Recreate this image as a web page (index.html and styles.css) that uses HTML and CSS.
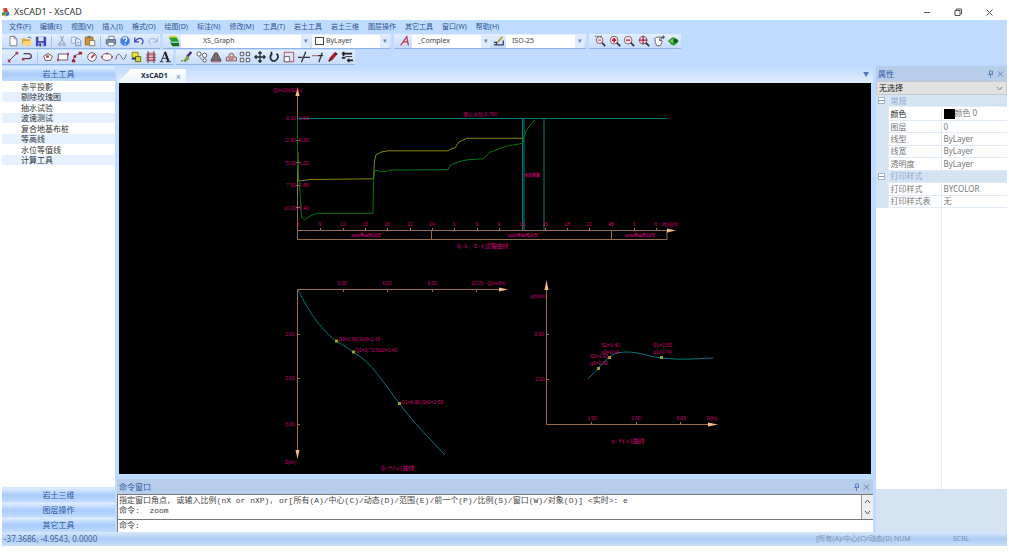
FILE: index.html
```html
<!DOCTYPE html>
<html lang="zh-CN">
<head>
<meta charset="utf-8">
<meta name="viewport" content="width=device-width">
<title>XsCAD1 - XsCAD</title>
<link rel="stylesheet" href="styles.css">
</head>
<body>
<div class="app">
  <header class="titlebar">
    <svg class="logo" viewBox="0 0 10 12"><path fill="#d2452c" d="M1 1l5-1 2 5-5 2z"/><path fill="#3f9b4a" d="M0 6l4-1 1 4-5 1z"/><path fill="#3a6fc4" d="M5 6l4-1v4l-4 2z"/><path fill="#e6ad2a" d="M1 10l4-1v2z"/></svg>
    <h1>XsCAD1 - XsCAD</h1>
    <div class="window-buttons">
      <button aria-label="Minimize"><svg viewBox="0 0 9 9"><path d="M1 4.500h6"/></svg></button>
      <button aria-label="Restore"><svg viewBox="0 0 9 9"><path d="M1 2.500h5v5h-5zM2.500 2v-1h5v5h-1"/></svg></button>
      <button aria-label="Close"><svg viewBox="0 0 9 9"><path d="M1.500 1.500l6 6m0-6l-6 6"/></svg></button>
    </div>
  </header>

  <nav class="menubar">
    <a href="#">文件(F)</a><a href="#">编辑(E)</a><a href="#">视图(V)</a><a href="#">插入(I)</a><a href="#">格式(O)</a><a href="#">绘图(D)</a><a href="#">标注(N)</a><a href="#">修改(M)</a><a href="#">工具(T)</a><a href="#">岩土工具</a><a href="#">岩土三维</a><a href="#">图层操作</a><a href="#">其它工具</a><a href="#">窗口(W)</a><a href="#">帮助(H)</a>
  </nav>

  <div class="toolbar-row">
    <div class="toolbar">
      <div class="tools">
        <button aria-label="New"><svg viewBox="0 0 14 14"><path fill="#fff" stroke="#6b7485" d="M3.500 1.500h5l3 3v8h-8z"/><path stroke="#6b7485" d="M8.500 1.500v3h3"/></svg></button>
        <button aria-label="Open"><svg viewBox="0 0 14 14"><path fill="#e3a62c" d="M1 4h4l1 1h5v7H1z"/><path fill="#ffd978" d="M3 7h11l-3 5H1z"/><path stroke="#4467a8" d="M8 3q3-2 4 1"/></svg></button>
        <button aria-label="Save"><svg viewBox="0 0 14 14"><path fill="#4546b5" d="M1 2h12v11H1z"/><path fill="#dfe8fa" d="M4 2h6v5H4z"/><path fill="#b9c5e6" d="M4 9h6v4H4z"/><path fill="#303392" d="M5 10h2v3H5z"/></svg></button>
      </div>
      <i class="sep"></i>
      <div class="tools">
        <button aria-label="Cut"><svg viewBox="0 0 14 14"><path stroke="#8794ac" d="M5 1l4 8M9 1L5 9"/><circle cx="4.500" cy="11" r="1.500" stroke="#7b8ec0"/><circle cx="9.500" cy="11" r="1.500" stroke="#7b8ec0"/></svg></button>
        <button aria-label="Copy"><svg viewBox="0 0 14 14"><path fill="#e8f0fc" stroke="#8aa0c8" d="M1.500 2.500h6v7h-6z"/><path fill="#e8f0fc" stroke="#6583b8" d="M6.500 4.500h4l2 2v6h-6z"/><path stroke="#8aa0c8" d="M8 8.500h3M8 10.500h3"/></svg></button>
        <button aria-label="Paste"><svg viewBox="0 0 14 14"><path fill="#d9912b" stroke="#996018" d="M1.500 2.500h9v9h-9z"/><path fill="#777" d="M4 1h4v3H4z"/><path fill="#fff" stroke="#8b7051" d="M6.500 6.500h6v6h-6z"/></svg></button>
      </div>
      <i class="sep"></i>
      <div class="tools">
        <button aria-label="Print"><svg viewBox="0 0 14 14"><path fill="#fff" stroke="#65758d" d="M4.500 1.500h6v4h-6z"/><path fill="#8491a6" stroke="#54637a" d="M1.500 5.500h11v5h-11z"/><path fill="#fff" stroke="#65758d" d="M3.500 8.500h7v4h-7z"/></svg></button>
        <button aria-label="Help"><svg viewBox="0 0 14 14"><circle cx="7" cy="7" r="5.500" fill="#3e7de0" stroke="#7da7e8"/><path stroke="#fff" stroke-width="1.500" d="M5 5q0-2 2-2 2 0 2 2 0 1-2 3M7 10v1"/></svg></button>
        <button aria-label="Undo"><svg viewBox="0 0 14 14"><path stroke="#4547b9" stroke-width="1.500" d="M2 3v5h5M2 8q3-5 7-4 5 2 1 7"/></svg></button>
        <button aria-label="Redo"><svg viewBox="0 0 14 14"><path stroke="#8fa3d8" d="M12 3v5H7M12 8Q9 3 5 4q-5 2-1 7"/></svg></button>
      </div>
    </div>
    <div class="toolbar">
      <div class="tools">
        <button aria-label="Layers"><svg viewBox="0 0 14 14"><path fill="#e6d625" d="M1 1h8l3 3H4z"/><path fill="#26a233" d="M1 3h9l3 5H4z"/><path fill="#137425" d="M2 7l2 2h9v4H5z"/></svg></button>
      </div>
      <label class="combo layer"><select aria-label="Layer"><option>XS_Graph</option></select></label>
      <label class="combo color"><i class="swatch"></i><select aria-label="Color"><option>ByLayer</option></select></label>
    </div>
    <div class="toolbar">
      <div class="tools">
        <button aria-label="Text style"><svg viewBox="0 0 14 14"><path stroke="#c23944" stroke-width="1.500" d="M2 12l7-10 2 10M5 8h5"/></svg></button>
      </div>
      <label class="combo style"><select aria-label="Text style"><option>_Complex</option></select></label>
      <div class="tools">
        <button aria-label="Dimension style"><svg viewBox="0 0 14 14"><path stroke="#b49535" stroke-width="2" d="M5 9l6-7"/><path stroke="#30435b" stroke-width="1.500" d="M1 8.500h3v3h8v-5M1 11.500h3"/></svg></button>
      </div>
      <label class="combo style"><select aria-label="Dimension style"><option>ISO-25</option></select></label>
    </div>
    <div class="toolbar">
      <div class="tools zoom">
        <button aria-label="Zoom window"><svg viewBox="0 0 14 14"><path stroke="#3d3d46" stroke-dasharray="2 1" d="M1 1.500h8"/><circle cx="6.500" cy="6" r="4" fill="#f2e4e9" stroke="#6d5865"/><path stroke="#bd3b4a" d="M4.500 6h4"/><path stroke="#333" stroke-width="2" d="M9.500 9l3.500 4"/></svg></button>
        <button aria-label="Zoom in"><svg viewBox="0 0 14 14"><circle cx="6" cy="6" r="4.500" fill="#f7e7ea" stroke="#6d5865"/><path stroke="#bd1f30" stroke-width="2" d="M3.500 6h5M6 3.500v5"/><path stroke="#333" stroke-width="2" d="M9 9l4 4"/></svg></button>
        <button aria-label="Zoom out"><svg viewBox="0 0 14 14"><circle cx="6" cy="6" r="4.500" fill="#f7e7ea" stroke="#6d5865"/><path stroke="#bd1f30" stroke-width="1.500" d="M3.500 6h5"/><path stroke="#333" stroke-width="2" d="M9 9l4 4"/></svg></button>
        <button aria-label="Zoom extents"><svg viewBox="0 0 14 14"><circle cx="6" cy="6" r="4.500" fill="#efdce6" stroke="#6d5865"/><path stroke="#a62445" stroke-width="1.500" d="M1 6h10M6 1v10"/><path stroke="#333" stroke-width="2" d="M9 9l4 4"/></svg></button>
        <button aria-label="Pan"><svg viewBox="0 0 14 14"><path fill="#fff" stroke="#4b4f59" d="M1.500 4.500l3-2h6v2h-3v2h3v2l-2 4h-4l-2-4v-3z"/><path stroke="#333" d="M10 2.500h4M12 .500v4"/></svg></button>
        <button aria-label="Orbit"><svg viewBox="0 0 14 14"><path fill="#269732" d="M1 7l5-4h3l5 4-5 5H6z"/><path fill="#78cf58" d="M3 7l4-3v6z"/><path fill="#165322" d="M8 5h4v4H8z"/></svg></button>
      </div>
    </div>
  </div>

  <div class="toolbar-row">
    <div class="toolbar">
      <div class="tools">
        <button aria-label="Line"><svg viewBox="0 0 14 14"><path stroke="#3e3942" d="M3 11l8-8"/><path fill="#b33b4b" d="M1 10h3v3H1zM10 1h3v3h-3z"/></svg></button>
        <button aria-label="Polyline"><svg viewBox="0 0 14 14"><path stroke="#4f3e48" stroke-width="1.500" d="M3 3h5q4 0 4 3t-4 3H2"/><path fill="#b33b4b" d="M1 8h3v3H1z"/></svg></button>
      </div>
      <i class="sep"></i>
      <div class="tools draw">
        <button aria-label="Polygon"><svg viewBox="0 0 14 14"><path fill="#fff" stroke="#594551" d="M7 3l5 3-2 5H4L2 6z"/><path fill="#b33b4b" d="M5 5h3v3H5z"/></svg></button>
        <button aria-label="Rectangle"><svg viewBox="0 0 14 14"><path fill="#fff" stroke="#594551" d="M1.500 3.500h11v7h-11z"/><path fill="#b33b4b" d="M0 9h2v3H0zM12 2h2v3h-2z"/></svg></button>
        <button aria-label="Arc"><svg viewBox="0 0 14 14"><path stroke="#594551" d="M3 12Q2 4 11 3"/><path fill="#a82237" d="M1 10h4v3H1zM9 1h4v3H9zM3 5h3v3H3z"/></svg></button>
        <button aria-label="Circle"><svg viewBox="0 0 14 14"><circle cx="7" cy="7" r="5" fill="#fff" stroke="#594551"/><path stroke="#b33b4b" stroke-width="2" d="M6 8l4-4"/></svg></button>
        <button aria-label="Ellipse"><svg viewBox="0 0 14 14"><ellipse cx="7" cy="7" rx="6" ry="4" fill="#fff" stroke="#6b4553"/><path fill="#b33b4b" d="M0 6h2v2H0zM6 2h2v2H6zM12 6h2v2h-2z"/></svg></button>
        <button aria-label="Spline"><svg viewBox="0 0 14 14"><path stroke="#414c66" d="M1 10C3 0 6 4 8 8s4 1 5-4"/></svg></button>
        <button aria-label="Insert block"><svg viewBox="0 0 14 14"><path fill="#f0e52d" stroke="#777b25" d="M2.500 1.500h7v6h-7z"/><path fill="#d9d62b" stroke="#555a25" d="M6.500 6.500h6v6h-6z"/><path fill="#29356a" d="M2 8h5v2H2z"/></svg></button>
        <button aria-label="Hatch"><svg viewBox="0 0 14 14"><path fill="#e2c8d0" stroke="#a24155" d="M3.500 2.500h7v9h-7z"/><path stroke="#b33b4b" d="M1 4.500h12M1 7.500h12M1 10.500h12"/><path stroke="#50333d" d="M3.500 0v14M10.500 0v14"/></svg></button>
        <button aria-label="Text"><svg viewBox="0 0 14 14"><path stroke="#1c2025" d="M1 12.500h4M8 12.500h6M4 8.500h5M2.500 12L7 1"/><path stroke="#1c2025" stroke-width="2.500" d="M7 1l4 11"/></svg></button>
      </div>
    </div>
    <div class="toolbar">
      <div class="tools modify">
        <button aria-label="Erase"><svg viewBox="0 0 14 14"><path stroke="#4a3978" stroke-width="3" d="M12 1L7 7"/><path fill="#85a43f" d="M7 5l3 4-5 4-1-3z"/><path stroke="#333" stroke-dasharray="2 1" d="M0 11.500h5"/></svg></button>
        <button aria-label="Copy object"><svg viewBox="0 0 14 14"><circle cx="3.500" cy="3.500" r="2.500" fill="#fff" stroke="#4e4e59"/><circle cx="10" cy="5" r="2.500" fill="#fff" stroke="#4e4e59"/><circle cx="10" cy="11" r="2" fill="#fff" stroke="#4e4e59"/><path stroke="#555" d="M4 7l3 3"/></svg></button>
        <button aria-label="Mirror"><svg viewBox="0 0 14 14"><path fill="#777" stroke="#3e3e49" d="M6 2v9H1zM8 2v9h5z"/><path stroke="#b33b4b" d="M7 1v12M1 12.500h12"/></svg></button>
        <button aria-label="Offset"><svg viewBox="0 0 14 14"><path fill="#e4c9d0" stroke="#704857" d="M1.500 11.500v-4l3-1q0-4 3-4t3 4l3 1v4z"/><path stroke="#a43c51" d="M4 9.500h6M5.500 9V7h4v2"/></svg></button>
        <button aria-label="Array"><svg viewBox="0 0 14 14"><path fill="#eef4ff" stroke="#43434e" d="M1.500 1.500h4v4h-4zM8.500 1.500h4v4h-4zM1.500 8.500h4v4h-4zM8.500 8.500h4v4h-4z"/></svg></button>
        <button aria-label="Move"><svg viewBox="0 0 14 14"><path stroke="#282b36" stroke-width="1.500" d="M7 1v12M1 7h12M5 3l2-2 2 2M5 11l2 2 2-2M3 5L1 7l2 2M11 5l2 2-2 2"/></svg></button>
        <button aria-label="Rotate"><svg viewBox="0 0 14 14"><path stroke="#1f2834" stroke-width="2" d="M5 3Q2 5 3 9q2 4 6 2 5-4 1-8M4 1v4"/></svg></button>
        <button aria-label="Scale"><svg viewBox="0 0 14 14"><path stroke="#b33b4b" d="M1.500 1.500h11v11h-11z"/><path fill="#fff" stroke="#5c5360" d="M1.500 6.500h6v6h-6z"/></svg></button>
        <button aria-label="Trim"><svg viewBox="0 0 14 14"><path stroke="#303039" stroke-width="1.500" d="M0 7.500h5M7 7.500h7M4 13l5-12"/></svg></button>
        <button aria-label="Extend"><svg viewBox="0 0 14 14"><path stroke="#303039" stroke-width="1.500" d="M7 5.500h6M8 13l4-11"/><path stroke="#b33b4b" d="M0 5.500h7"/></svg></button>
        <button aria-label="Match properties"><svg viewBox="0 0 14 14"><path stroke="#a91c24" stroke-width="4" d="M4 10l6-7"/><path stroke="#492132" stroke-width="2" d="M2 12l3-3M9 2l3 2"/></svg></button>
        <button aria-label="Break"><svg viewBox="0 0 14 14"><path stroke="#20222a" stroke-width="2" d="M1 3h12M1 8h4M7 11h7M3 1v5M9 9v4"/><path stroke="#20222a" d="M5 6.500h8"/></svg></button>
      </div>
    </div>
  </div>

  <main class="workspace">
    <aside class="toolbox">
      <button class="section">岩土工具</button>
      <ul>
        <li>赤平投影</li>
        <li>剔除玫瑰图</li>
        <li>抽水试验</li>
        <li>波速测试</li>
        <li>复合地基布桩</li>
        <li>等高线</li>
        <li>水位等值线</li>
        <li>计算工具</li>
      </ul>
      <button class="section">岩土三维</button>
      <button class="section">图层操作</button>
      <button class="section">其它工具</button>
    </aside>

    <section class="document">
      <div class="tabs">
        <div class="tab"><span>XsCAD1</span><button aria-label="Close tab">×</button></div>
        <button class="tab-menu" aria-label="Tab list">▼</button>
      </div>

      <svg class="drawing" viewBox="119 83 752 391">
        <!-- Q-t / S-t -->
        <g class="axis">
          <path d="M297.500 92v147.500h369.500v-9M297 230.500h374M431.500 230v9M611.500 230v9"/>
          <path d="M320.500 228v3M343.500 228v3M365.500 228v3M387.500 228v3M410.500 228v3M432.500 228v3M454.500 228v3M477.500 228v3M499.500 228v3M522.500 228v3M545.500 228v3M567.500 228v3M589.500 228v3M634.500 228v3M656.500 228v3M296 140.500h4M296 162.500h4M296 185.500h4M296 207.500h4"/>
          <path class="arrow" d="M295.500 96l2-9 2 9zM667 228.500l9 2-9 2z"/>
        </g>
        <path class="curve" d="M297 118.500h370M522.500 118v112M524 118v112M544 118v112"/>
        <path class="yield" d="M298 152v28l2 1 10-1.500 63.500-.700 1-18 1.500-6 6-3 6-1h60l2-1.500 5-1.500 4-6 8-3.500h56"/>
        <path class="level" d="M297.500 119v46l2.500 27 1.500 25 3.500 2.500 7-4.500 5-1.700h56l.500-33 1.500-10 5 1h7l3-1.200 58-.500 2-4.300 9-3.500 8-2 16-1 7-6.500 16-6 17-3 .500-4 2.500-8 4-6 5-5.500"/>
        <g class="num">
          <text x="273" y="92">Q(m3/h)S(m)</text>
          <text x="286" y="120">0.00</text><text x="299" y="120">0.00</text>
          <text x="286" y="142">2.50</text><text x="299" y="142">0.60</text>
          <text x="286" y="165">5.00</text><text x="299" y="165">1.20</text>
          <text x="286" y="187">7.50</text><text x="299" y="187">1.80</text>
          <text x="284" y="210">10.00</text><text x="299" y="210">2.40</text>
          <text x="463" y="116">静止水位:2.750</text>
          <text x="524" y="177" class="small">水位恢复</text>
          <text x="351" y="237" class="small">2021年06月20日</text>
          <text x="508" y="237" class="small">2021年06月21日</text>
          <text x="625" y="237" class="small">2021年06月22日</text>
          <text x="662" y="226">时间(h)</text>
        </g>
        <g class="num mid">
          <text x="298" y="226">6</text><text x="320" y="226">9</text><text x="343" y="226">12</text><text x="365" y="226">15</text><text x="387" y="226">18</text><text x="410" y="226">21</text><text x="432" y="226">24</text><text x="454" y="226">3</text><text x="477" y="226">6</text><text x="499" y="226">9</text><text x="522" y="226">12</text><text x="545" y="226">15</text><text x="567" y="226">18</text><text x="589" y="226">21</text><text x="611" y="226">48</text><text x="634" y="226">3</text><text x="656" y="226">6</text>
        </g>
        <text class="caption" x="457" y="248">Q-t、S-t过程曲线</text>

        <!-- Q-f(s) -->
        <g class="axis">
          <path d="M297.500 455V289.500H504M343.500 289v3M387.500 289v3M432.500 289v3M476.500 289v3M297 334.500h3M297 378.500h3M297 424.500h3"/>
          <path class="arrow" d="M499 287.500l9 2-9 2zM295.500 450l2 9 2-9z"/>
        </g>
        <path class="curve" d="M298 290C306 305 315 324 336 341C343 345 348 348 353 352C372 362 384 384 399 403C414 423 428 437 445 455"/>
        <path class="point" d="M335 339.500h3v3h-3zM352 350.500h3v3h-3zM398 402h3v3h-3z"/>
        <g class="num mid">
          <text x="342" y="285">3.00</text><text x="387" y="285">6.00</text><text x="432" y="285">9.00</text><text x="477" y="285">12.00</text>
          <text x="290" y="336">1.00</text><text x="290" y="380">2.00</text><text x="290" y="426">3.00</text>
          <text x="290" y="464">S(m)</text>
        </g>
        <g class="num">
          <text x="487" y="285">Q(m3/h)</text>
          <text x="338" y="341">Q3=2.68,Sd3=1.16</text>
          <text x="355" y="352">Q2=3.73,Sd2=1.40</text>
          <text x="401" y="404">Q1=6.80,Sd1=2.55</text>
        </g>
        <text class="caption" x="381" y="470">Q-f(s)曲线</text>

        <!-- q-f(s) -->
        <g class="axis">
          <path d="M546.500 286v138.500H713M546 334.500h3M546 379.500h3M591.500 422v3M636.500 422v3M680.500 422v3"/>
          <path class="arrow" d="M544.500 290l2-10 2 10zM708 422.500l10 2-10 2z"/>
        </g>
        <path class="curve" d="M588 379L609 357C614 353 621 352 627 352C640 352 650 357 661 358C684 360 690 359 713 358"/>
        <path class="point" d="M597 367h3v3h-3zM608 356h3v3h-3zM660 356h3v3h-3z"/>
        <g class="num mid">
          <text x="539" y="336">2.00</text><text x="540" y="381">1.00</text>
          <text x="592" y="420">1.00</text><text x="636" y="420">2.00</text><text x="681" y="420">3.00</text><text x="712" y="420">S(m)</text>
          <text x="538" y="298">q(l/sm)</text>
        </g>
        <g class="num">
          <text x="601" y="347">S2=1.40</text><text x="601" y="354">q2=0.94</text>
          <text x="590" y="358">S3=1.16</text><text x="590" y="365">q3=0.82</text>
          <text x="653" y="347">S1=2.55</text><text x="653" y="354">q1=0.74</text>
        </g>
        <text class="caption" x="611" y="443">q-f(s)曲线</text>
      </svg>

      <div class="command">
        <div class="pane-head">
          <h2>命令窗口</h2>
          <button aria-label="Pin"><svg viewBox="0 0 7 8"><path d="M2.500 1v3h3V1zM1 4.500h5M3.500 5v3"/></svg></button>
          <button aria-label="Close"><svg viewBox="0 0 7 8"><path d="M1 1.500l5 5m0-5l-5 5"/></svg></button>
        </div>
        <div class="log">
          <p>指定窗口角点, 或输入比例(nX or nXP), or[所有(A)/中心(C)/动态(D)/范围(E)/前一个(P)/比例(S)/窗口(W)/对象(O)] &lt;实时&gt;: e<br>命令: &nbsp;zoom</p>
          <div class="scroll">
            <button aria-label="Scroll up"><svg viewBox="0 0 7 5"><path d="M1 4l2.500-3L6 4"/></svg></button>
            <button aria-label="Scroll down"><svg viewBox="0 0 7 5"><path d="M1 1l2.500 3L6 1"/></svg></button>
          </div>
        </div>
        <div class="prompt">
          <label for="cmd">命令:</label>
          <input id="cmd" type="text">
        </div>
      </div>
    </section>

    <aside class="properties">
      <div class="pane-head">
        <h2>属性</h2>
        <button aria-label="Pin"><svg viewBox="0 0 7 8"><path d="M2.500 1v3h3V1zM1 4.500h5M3.500 5v3"/></svg></button>
        <button aria-label="Close"><svg viewBox="0 0 7 8"><path d="M1 1.500l5 5m0-5l-5 5"/></svg></button>
      </div>
      <label class="picker">
        <select aria-label="Selection"><option>无选择</option></select>
        <svg viewBox="0 0 7 5"><path d="M1 1l2.500 3L6 1"/></svg>
      </label>
      <table>
        <colgroup><col class="col-fold"><col class="col-name"><col></colgroup>
        <tr class="group"><td><i class="fold"></i></td><th colspan="2">常规</th></tr>
        <tr class="current"><td></td><th>颜色</th><td><i class="chip"></i>颜色 0</td></tr>
        <tr><td></td><th>图层</th><td>0</td></tr>
        <tr><td></td><th>线型</th><td>ByLayer</td></tr>
        <tr><td></td><th>线宽</th><td>ByLayer</td></tr>
        <tr><td></td><th>透明度</th><td>ByLayer</td></tr>
        <tr class="group"><td><i class="fold"></i></td><th colspan="2">打印样式</th></tr>
        <tr><td></td><th>打印样式</th><td>BYCOLOR</td></tr>
        <tr><td></td><th>打印样式表</th><td>无</td></tr>
      </table>
      <div class="rest"></div>
      <div class="hint"></div>
    </aside>
  </main>

  <footer class="statusbar">
    <span class="coords">-37.3686, -4.9543, 0.0000</span>
    <span class="mode">[所有(A)/中心(C)/动态(D) NUM</span>
    <span class="lock">SCRL</span>
  </footer>
</div>
</body>
</html>
```

FILE: styles.css
```css
* {
  box-sizing: border-box;
}

body {
  margin: 0;
  font-family: "Noto Sans", "Noto Sans CJK SC", sans-serif;
  font-size: 8px;
  line-height: 10px;
  color: #444;
  background: #fff;
}

button, select, input {
  margin: 0;
  padding: 0;
  border: 0;
  border-radius: 0;
  background: none;
  font: inherit;
  color: inherit;
  appearance: none;
  outline: none;
}

h1, h2, p, ul {
  margin: 0;
  padding: 0;
  font-size: inherit;
  font-weight: normal;
  list-style: none;
}

svg {
  display: block;
  fill: none;
}

.app {
  display: flex;
  flex-direction: column;
  min-height: 100vh;
  padding: 0 2px 6px;
}

/* title bar */

.titlebar {
  display: flex;
  align-items: center;
  height: 20px;
  padding-top: 4px;
}

.logo {
  width: 8px;
  height: 11px;
}

.titlebar h1 {
  flex: 1;
  padding-left: 4px;
  font-size: 9px;
  color: #333;
}

.window-buttons {
  display: flex;
  gap: 22px;
  padding-right: 13px;
}

.window-buttons svg {
  width: 9px;
  height: 9px;
  stroke: #555;
}

/* menu and toolbars */

.menubar {
  display: flex;
  align-items: center;
  gap: 9px;
  height: 14px;
  padding-left: 7px;
  background: #bfdbff;
  font-size: 7px;
}

.menubar a {
  color: #2c5590;
  text-decoration: none;
  white-space: nowrap;
}

.toolbar-row {
  display: flex;
  gap: 3px;
  height: 16px;
  background: #bfdbff;
}

.toolbar {
  display: flex;
  align-items: center;
  height: 15px;
  padding-left: 4px;
  border-bottom: 1px solid #8fb4e6;
  background: linear-gradient(#e3efff, #c7dcfa);
}

.tools {
  display: flex;
}

.tools button {
  flex: 1 0 14px;
  padding: 0 1px;
}

.tools svg {
  width: 12px;
  height: 12px;
}

.tools.draw {
  width: 132px;
}

.tools.modify {
  width: 175px;
}

.tools.zoom {
  width: 88px;
}

.sep {
  width: 1px;
  height: 11px;
  margin: 0 3px;
  background: #a6c3ee;
}

.combo {
  display: flex;
  align-items: center;
  height: 13px;
  margin-right: 2px;
  background: #fff;
}

.combo select {
  flex: 1;
  min-width: 0;
  height: 13px;
  font-size: 7px;
}

.combo::after {
  content: "▾";
  width: 9px;
  height: 13px;
  background: #deebfd;
  color: #5e83bc;
  font-size: 7px;
  line-height: 12px;
  text-align: center;
}

.combo.layer {
  width: 129px;
  padding-left: 22px;
}

.combo.color {
  width: 77px;
  padding-left: 3px;
}

.combo.style {
  width: 78px;
  padding-left: 6px;
}

.swatch {
  width: 9px;
  height: 8px;
  margin-right: 2px;
  border: 1px solid #444;
}

/* work area */

.workspace {
  flex: 1;
  display: grid;
  grid-template-columns: 113px minmax(0, 1fr) 131px;
  background: #bfdbff;
}

.toolbox {
  display: flex;
  flex-direction: column;
  background: #fff;
}

.toolbox ul {
  flex: 1;
}

.toolbox li {
  height: 11px;
  padding-left: 19px;
  color: #333;
  line-height: 11px;
}

.toolbox li:nth-child(even) {
  height: 10px;
  background: #e5f1ff;
  line-height: 10px;
}

.section {
  height: 15px;
  border-top: 1px solid #d5e6fd;
  background: linear-gradient(#e0edff, #a9ccfb 50%, #c0dbff);
  color: #2d5c9e;
}

.document {
  display: flex;
  flex-direction: column;
  padding: 0 3px 0 2px;
}

.tabs {
  display: flex;
  justify-content: space-between;
  align-items: flex-end;
  height: 17px;
  background: linear-gradient(#bfdbff, #e1eeff);
}

.tab {
  display: flex;
  gap: 8px;
  height: 14px;
  padding: 0 5px 0 24px;
  background: linear-gradient(#fff, #e7f4fb);
  clip-path: polygon(14px 0, 100% 0, 100% 100%, 0 100%);
  color: #1c2b43;
  line-height: 13px;
}

.tab span {
  font-size: 7px;
  font-weight: bold;
}

.tab button {
  color: #7891b5;
  font-size: 9px;
}

.tab-menu {
  padding: 0 4px 4px 0;
  color: #4e79b9;
  font-size: 6px;
}

.drawing {
  flex: 1;
  width: calc(100% - 4px);
  min-height: 0;
  margin: 0 2px;
  background: #000;
}

.axis {
  stroke: #96704c;
}

.arrow {
  fill: #f3bb86;
  stroke: none;
}

.curve {
  stroke: #087878;
}

.yield {
  stroke: #858511;
}

.level {
  stroke: #087514;
}

.point {
  fill: #91a629;
}

.num {
  fill: #d00078;
  font: 5px "Liberation Sans", "Noto Sans CJK SC", sans-serif;
}

.num .small {
  font-size: 4px;
  font-weight: bold;
}

.mid {
  text-anchor: middle;
}

.caption {
  fill: #d00078;
  font: 6px "Liberation Mono", "Noto Sans CJK SC", monospace;
}

/* panes */

.pane-head {
  display: flex;
  align-items: center;
  gap: 3px;
  height: 15px;
  padding: 0 3px 0 2px;
  background: #b7cde9;
  color: #2c5ea5;
}

.pane-head h2 {
  flex: 1;
}

.pane-head svg {
  width: 7px;
  height: 8px;
  stroke: #6186be;
}

.command {
  padding-top: 5px;
}

.log {
  display: flex;
  justify-content: space-between;
  height: 26px;
  border: solid #777;
  border-width: 1px 0 1px 1px;
  background: #fff;
}

.log p {
  padding: 1px;
  font-family: "Liberation Mono", "Noto Sans CJK SC", monospace;
  white-space: nowrap;
}

.scroll {
  display: flex;
  flex-direction: column;
  justify-content: space-between;
  padding: 4px 2px;
  border-left: 1px solid #999;
  background: #eee;
}

.scroll svg {
  width: 7px;
  height: 5px;
  stroke: #555;
}

.prompt {
  display: flex;
  align-items: center;
  height: 12px;
  padding-left: 1px;
  border-left: 1px solid #777;
  background: #fff;
  font-family: "Liberation Mono", "Noto Sans CJK SC", monospace;
}

.prompt input {
  flex: 1;
  height: 10px;
}

.properties {
  display: flex;
  flex-direction: column;
}

.picker {
  display: flex;
  align-items: center;
  height: 14px;
  padding: 0 3px 0 2px;
  border: 1px solid #c5c9ce;
  background: #e1e1e1;
  color: #222;
}

.picker select {
  flex: 1;
}

.picker svg {
  width: 7px;
  height: 5px;
  stroke: #888;
}

.properties table {
  width: 100%;
  height: 113px;
  border-collapse: collapse;
  table-layout: fixed;
  background: #fff;
  color: #777;
}

.col-fold {
  width: 12px;
}

.col-name {
  width: 53px;
}

.properties td, .properties th {
  padding: 0 0 0 2px;
  border: 1px solid #dfeaf5;
  border-width: 0 0 1px 1px;
  font-weight: normal;
  text-align: left;
  white-space: nowrap;
}

.properties td:first-child {
  border: 0;
  background: #d5e4f2;
}

.properties .group th {
  background: #d5e4f2;
  color: #8eacd0;
}

.properties .current th {
  color: #222;
}

.fold {
  display: block;
  width: 7px;
  height: 7px;
  border: 1px solid #a2b6cd;
  background: linear-gradient(#fff 2px, #7f9abc 2px, #7f9abc 3px, #fff 3px);
}

.chip {
  display: inline-block;
  width: 11px;
  height: 10px;
  background: #000;
  vertical-align: middle;
}

/* name column keeps running under the last row */
.rest {
  flex: 1;
  background: linear-gradient(#e3ecf6, #e3ecf6) 65px 0 / 1px 100% no-repeat #fff;
}

.hint {
  height: 43px;
  background: #d5e4f2;
}

/* status bar */

.statusbar {
  display: flex;
  align-items: center;
  height: 14px;
  padding-left: 2px;
  background: linear-gradient(#d9e8fc, #acccf5 50%, #cbdffa);
  color: #45638f;
}

.coords {
  flex: 1;
}

.mode, .lock {
  color: #8292ac;
  font-size: 7px;
}

.mode {
  width: 137px;
}

.lock {
  width: 54px;
}
```
